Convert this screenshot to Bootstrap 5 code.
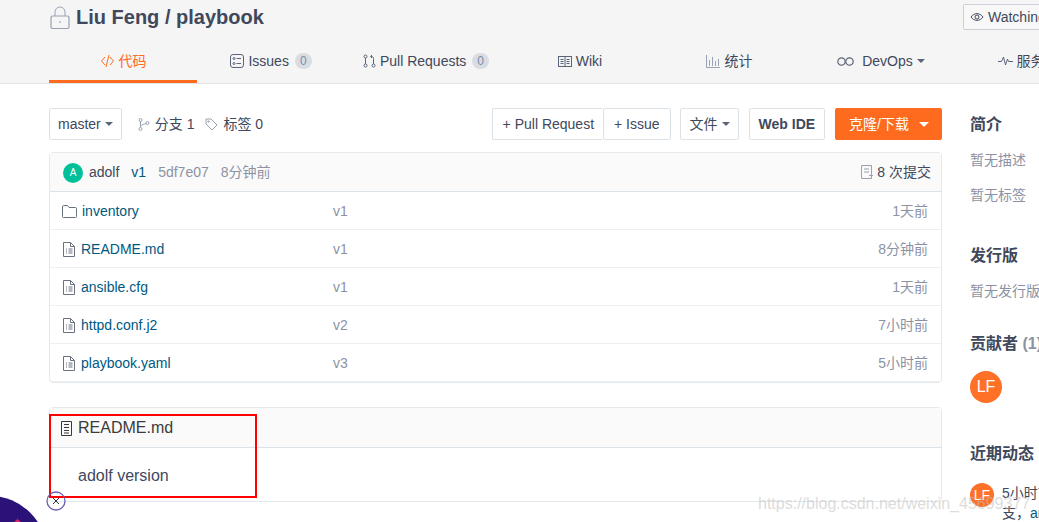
<!DOCTYPE html>
<html lang="zh">
<head>
    <meta charset="utf-8">
    <title>Liu Feng / playbook</title>
    <link href="https://cdn.jsdelivr.net/npm/bootstrap@5.3.0/dist/css/bootstrap.min.css" rel="stylesheet">
    <style>
        html, body { height: 100%; overflow: hidden; }
        body {
            font-family: "Liberation Sans", "Noto Sans CJK SC", sans-serif;
            font-size: 14px;
            color: #40485b;
            position: relative;
        }
        svg { fill: none; stroke: currentColor; stroke-width: 1; flex: none; }
        .repo-head { background: #f5f5f5; border-bottom: 1px solid #e3e6e8; height: 84px; padding-left: 49px; width: 1100px; }
        .repo-title { height: 39px; align-items: flex-start; }
        .repo-title h1 { font-size: 20px; font-weight: 700; margin: 0; color: #40485b; line-height: 35px; }
        .lock-ico { color: #98a2b3; margin-right: 4px; margin-top: 6px; }
        .watch-btn { position: absolute; left: 963px; top: 4px; height: 26px; width: 110px; background: #f8f8f8; border: 1px solid #ccd1d9; border-radius: 2px; padding-left: 6px; white-space: nowrap; }
        .repo-tabs { height: 44px; }
        .repo-tab { height: 44px; padding-bottom: 0; border-bottom: 3px solid transparent; border-top: 3px solid transparent; color: #40485b; text-decoration: none; white-space: nowrap; flex: none; }
        .repo-tab.on { color: #fe6a1e; border-bottom-color: #fe6a1e; }
        .w-148 { width: 148px; }
        .w-162 { width: 162px; }
        .w-146 { width: 146px; }
        .w-152 { width: 152px; }
        .w-128 { width: 128px; }
        .tab-count { background: #d9dde3; color: #7c8ba5; border-radius: 8px; font-size: 12px; line-height: 16px; padding: 0 5px; margin-left: 2px; }
        .tab-ico { color: #5b6478; }
        .page-body { padding: 24px 0 0 49px; width: 1100px; gap: 28px; }
        .main-col { width: 893px; flex: none; }
        .side-col { flex: none; width: 120px; padding-top: 5px; }
        .tool-btn { height: 32px; background: #fff; border: 1px solid #dce3e8; border-radius: 2px; padding: 0 9px; color: #40485b; white-space: nowrap; }
        .pr-btn { padding: 0 9px 0 10px; border-right: 0; }
        .issue-btn { padding: 0 10px; }
        .file-btn { padding: 0 8px 0 9px; }
        .tool-gap { margin-left: 9px; }
        .tool-gap-lg { margin-left: 10px; }
        .tag-gap { margin-left: 11px; }
        .caret-down { border-left: 4px solid transparent; border-right: 4px solid transparent; border-top: 4px solid #5b6478; display: inline-block; }
        .orange-btn { background: #fe6a1e; border-color: #fe6a1e; color: #fff; padding: 0 12px 0 13px; gap: 10px; }
        .orange-btn .caret-down { border-left-width: 5px; border-right-width: 5px; border-top: 5px solid #fff; }
        .stat-ico { color: #98a2b3; }
        .stat-gap { gap: 5px; }
        .repo-box { border: 1px solid #e3e9ed; border-radius: 4px; }
        .file-box { margin-top: 12px; }
        .commit-head { height: 39px; background: #fafafa; border-bottom: 1px solid #dce3e8; padding: 0 10px 0 13px; }
        .avatar-sm { width: 20px; height: 20px; border-radius: 50%; background: #00c09a; color: #fff; font-size: 10px; line-height: 20px; text-align: center; margin-top: 2px; margin-right: 6px; }
        .gray-txt { color: #8c92a4; }
        .link-teal { color: #005980; text-decoration: none; }
        .file-row { height: 38px; border-bottom: 1px solid #edf0f2; padding: 1px 13px 0 12px; }
        .file-row .file-ico { color: #6a7180; margin-right: 5px; }
        .file-name { width: 271px; flex: none; }
        .readme-box { margin-top: 24px; height: 95px; }
        .readme-head { height: 40px; background: #fafafa; border-bottom: 1px solid #dce3e8; padding: 1px 0 0 10px; font-size: 16px; color: #3a3a3a; }
        .readme-body { padding: 18px 0 0 28px; font-size: 16px; line-height: 20px; }
        .side-title { font-size: 16px; font-weight: 700; color: #40485b; line-height: 24px; white-space: nowrap; }
        .side-muted { color: #8c92a4; line-height: 20px; white-space: nowrap; }
        .avatar-lg { width: 32px; height: 32px; border-radius: 50%; background: #fe7126; color: #fff; font-size: 16px; line-height: 32px; text-align: center; }
        .avatar-md { width: 24px; height: 24px; border-radius: 50%; background: #fe7126; color: #fff; font-size: 14px; line-height: 24px; text-align: center; flex: none; }
        .activity { gap: 8px; width: 172px; line-height: 20px; color: #40485b; }
        .mt-s1 { margin-top: 13px; }
        .mt-s2 { margin-top: 15px; }
        .mt-s3 { margin-top: 39px; }
        .mt-s4 { margin-top: 31px; }
        .mt-s6 { margin-top: 39px; }
        .mt-s7 { margin-top: 17px; }
        .red-mark { position: absolute; left: 49px; top: 414px; width: 208px; height: 84px; border: 2px solid #f00; }
        .ball { position: absolute; left: -67px; top: 496px; width: 114px; height: 114px; border-radius: 50%; background: #2a1279; }
        .ball-dot { position: absolute; left: 13px; top: 517px; color: #e0246a; font-size: 10px; line-height: 10px; }
        .ball-close { position: absolute; left: 46px; top: 491px; color: #6a5db3; }
        .wm-text { position: absolute; left: 758px; top: 493px; font-size: 16px; line-height: 21px; color: rgba(190, 190, 190, .55); white-space: nowrap; }
    </style>
</head>
<body>
    <div class="repo-head">
        <div class="repo-title d-flex">
            <svg class="lock-ico" width="23" height="24" viewBox="0 0 23 24"><rect x="2" y="10" width="18" height="12.5" rx="1.5" stroke-width="1.2"/><path d="M6 10V6a5 5 0 0 1 10 0v4M11 15v2"/></svg>
            <h1>Liu Feng / playbook</h1>
        </div>
        <div class="watch-btn d-flex align-items-center gap-1">
            <svg width="14" height="12" viewBox="0 0 14 12"><path d="M1 6c3-4.500 9-4.500 12 0-3 4.500-9 4.500-12 0z"/><circle cx="7" cy="6" r="2"/></svg>
            Watching
        </div>
        <nav class="repo-tabs d-flex">
            <a class="repo-tab on w-148 d-flex align-items-center justify-content-center gap-1" href="#">
                <svg width="15" height="14" viewBox="0 0 15 14"><path d="M5 3 1.500 7 5 11M10 3l3.500 4L10 11M9 1 6 13"/></svg>
                代码
            </a>
            <a class="repo-tab w-148 d-flex align-items-center justify-content-center gap-1" href="#">
                <svg class="tab-ico" width="14" height="14" viewBox="0 0 14 14"><rect x=".5" y=".5" width="13" height="13" rx="2.500"/><path d="M6.500 4.500H11M6.500 9.500H11"/><circle cx="4" cy="4.500" r="1"/><circle cx="4" cy="9.500" r="1"/></svg>
                Issues <span class="tab-count">0</span>
            </a>
            <a class="repo-tab w-162 d-flex align-items-center justify-content-center gap-1" href="#">
                <svg class="tab-ico" width="13" height="14" viewBox="0 0 13 14"><circle cx="2.500" cy="2.500" r="1.500"/><circle cx="2.500" cy="11.500" r="1.500"/><circle cx="10.500" cy="11.500" r="1.500"/><path d="M2.500 4v6M10.500 10V4.500C10.500 3 9.500 2.500 8 2.500M9 1 7.500 2.500 9 4"/></svg>
                Pull Requests <span class="tab-count">0</span>
            </a>
            <a class="repo-tab w-146 d-flex align-items-center justify-content-center gap-1" href="#">
                <svg class="tab-ico" width="14" height="11" viewBox="0 0 14 11"><rect x=".5" y=".5" width="13" height="10"/><path d="M7 .5v10M2.500 3.500h3M2.500 5.500h3M2.500 7.500h3M8.500 3.500h3M8.500 5.500h3M8.500 7.500h3"/></svg>
                Wiki
            </a>
            <a class="repo-tab w-152 d-flex align-items-center justify-content-center stat-gap" href="#">
                <svg class="stat-ico" width="14" height="14" viewBox="0 0 14 14"><path d="M.5 1v12.500H14M3.500 6v6M6.500 3v9M9.500 7v5M12.500 5v7"/></svg>
                统计
            </a>
            <a class="repo-tab w-152 d-flex align-items-center justify-content-center" href="#">
                <svg class="tab-ico" width="17" height="9" viewBox="0 0 17 9"><circle cx="4.500" cy="4.500" r="3.700" stroke-width="1.200"/><circle cx="12.500" cy="4.500" r="3.700" stroke-width="1.200"/></svg>
                <span class="ms-2 me-1">DevOps</span><span class="caret-down"></span>
            </a>
            <a class="repo-tab w-128 d-flex align-items-center justify-content-center gap-1" href="#">
                <svg class="tab-ico" width="15" height="10" viewBox="0 0 15 10"><path d="M0 5.500h3.500L5.500 1l2 8 2-6 1 2.500H15"/></svg>
                服务
            </a>
        </nav>
    </div>

    <div class="page-body d-flex">
        <div class="main-col">
            <div class="d-flex align-items-center">
                <div class="tool-btn d-flex align-items-center gap-1 px-2">master <span class="caret-down"></span></div>
                <div class="d-flex align-items-center ms-3 stat-gap">
                    <svg class="stat-ico" width="12" height="13" viewBox="0 0 12 13"><circle cx="2.500" cy="2" r="1.500"/><circle cx="2.500" cy="11" r="1.500"/><circle cx="9.500" cy="5" r="1.500"/><path d="M2.500 3.500v6M8 5.500c-2 .5-4.500 1-5.500 3"/></svg>
                    <span>分支 1</span>
                </div>
                <div class="d-flex align-items-center tag-gap stat-gap">
                    <svg class="stat-ico" width="13" height="13" viewBox="0 0 13 13"><path d="M1 1h5l6 6-5 5-6-6z"/><circle cx="3.500" cy="3.500" r=".7"/></svg>
                    <span>标签 0</span>
                </div>
                <div class="ms-auto d-flex align-items-center">
                    <div class="tool-btn pr-btn d-flex align-items-center">+ Pull Request</div>
                    <div class="tool-btn issue-btn d-flex align-items-center">+ Issue</div>
                    <div class="tool-btn file-btn tool-gap d-flex align-items-center gap-1">文件 <span class="caret-down"></span></div>
                    <div class="tool-btn tool-gap-lg d-flex align-items-center fw-bold">Web IDE</div>
                    <div class="tool-btn orange-btn tool-gap-lg d-flex align-items-center">克隆/下载 <span class="caret-down"></span></div>
                </div>
            </div>

            <div class="repo-box file-box">
                <div class="commit-head d-flex align-items-center">
                    <div class="avatar-sm">A</div>
                    <span>adolf</span>
                    <a class="link-teal ms-2 ps-1" href="#">v1</a>
                    <span class="gray-txt ms-2 ps-1">5df7e07</span>
                    <span class="gray-txt ms-2 ps-1">8分钟前</span>
                    <span class="ms-auto d-flex align-items-center gap-1">
                        <svg class="stat-ico" width="13" height="14" viewBox="0 0 13 14"><path d="M1.500.5h10v13h-10zM4 4h5M4 7h5M9 10.500h4"/></svg>
                        8 次提交
                    </span>
                </div>
                <div class="file-row d-flex align-items-center">
                    <div class="file-name d-flex align-items-center">
                        <svg class="file-ico" width="15" height="13" viewBox="0 0 15 13"><path d="M.5 2V11.500q0 1 1 1h12q1 0 1-1V3.500q0-1-1-1H7L5.500.5h-4q-1 0-1 1.500z"/></svg>
                        <a class="link-teal" href="#">inventory</a>
                    </div>
                    <span class="gray-txt">v1</span>
                    <span class="gray-txt ms-auto">1天前</span>
                </div>
                <div class="file-row d-flex align-items-center">
                    <div class="file-name d-flex align-items-center">
                        <svg class="file-ico" width="14" height="15" viewBox="0 0 14 15"><path d="M1.500.5h7l4 4v10h-11zM8.500.5v4h4M4 7h1M4 9h1M4 11h1M6.500 7h4M6.500 9h4M6.500 11h4"/></svg>
                        <a class="link-teal" href="#">README.md</a>
                    </div>
                    <span class="gray-txt">v1</span>
                    <span class="gray-txt ms-auto">8分钟前</span>
                </div>
                <div class="file-row d-flex align-items-center">
                    <div class="file-name d-flex align-items-center">
                        <svg class="file-ico" width="14" height="15" viewBox="0 0 14 15"><path d="M1.500.5h7l4 4v10h-11zM8.500.5v4h4M4 7h1M4 9h1M4 11h1M6.500 7h4M6.500 9h4M6.500 11h4"/></svg>
                        <a class="link-teal" href="#">ansible.cfg</a>
                    </div>
                    <span class="gray-txt">v1</span>
                    <span class="gray-txt ms-auto">1天前</span>
                </div>
                <div class="file-row d-flex align-items-center">
                    <div class="file-name d-flex align-items-center">
                        <svg class="file-ico" width="14" height="15" viewBox="0 0 14 15"><path d="M1.500.5h7l4 4v10h-11zM8.500.5v4h4M4 7h1M4 9h1M4 11h1M6.500 7h4M6.500 9h4M6.500 11h4"/></svg>
                        <a class="link-teal" href="#">httpd.conf.j2</a>
                    </div>
                    <span class="gray-txt">v2</span>
                    <span class="gray-txt ms-auto">7小时前</span>
                </div>
                <div class="file-row d-flex align-items-center">
                    <div class="file-name d-flex align-items-center">
                        <svg class="file-ico" width="14" height="15" viewBox="0 0 14 15"><path d="M1.500.5h7l4 4v10h-11zM8.500.5v4h4M4 7h1M4 9h1M4 11h1M6.500 7h4M6.500 9h4M6.500 11h4"/></svg>
                        <a class="link-teal" href="#">playbook.yaml</a>
                    </div>
                    <span class="gray-txt">v3</span>
                    <span class="gray-txt ms-auto">5小时前</span>
                </div>
            </div>

            <div class="repo-box readme-box">
                <div class="readme-head d-flex align-items-center gap-1">
                    <svg width="14" height="15" viewBox="0 0 14 15"><path d="M1.500.5h10v14h-10zM4 3.500h5M4 6.500h5M4 9.500h5M4 12h5"/></svg>
                    README.md
                </div>
                <div class="readme-body">adolf version</div>
            </div>
        </div>

        <div class="side-col">
            <div class="side-title">简介</div>
            <div class="side-muted mt-s1">暂无描述</div>
            <div class="side-muted mt-s2">暂无标签</div>
            <div class="side-title mt-s3">发行版</div>
            <div class="side-muted mt-s1">暂无发行版</div>
            <div class="side-title mt-s4">贡献者 <span class="gray-txt">(1)</span></div>
            <div class="avatar-lg mt-s2">LF</div>
            <div class="side-title mt-s6">近期动态</div>
            <div class="activity d-flex mt-s7">
                <div class="avatar-md">LF</div>
                <div>5小时前推送了新的分支，<a class="link-teal" href="#">ansible</a></div>
            </div>
        </div>
    </div>

    <div class="red-mark"></div>
    <div class="ball"></div>
    <div class="ball-dot">✦</div>
    <svg class="ball-close" width="20" height="20" viewBox="0 0 20 20"><circle cx="10" cy="10" r="9" stroke-width="1.300"/><path d="M7 7l6 6M13 7l-6 6" stroke="#333"/></svg>
    <div class="wm-text">https://blog.csdn.net/weixin_45699377</div>

    <script src="https://cdn.jsdelivr.net/npm/bootstrap@5.3.0/dist/js/bootstrap.bundle.min.js"></script>
</body>
</html>
